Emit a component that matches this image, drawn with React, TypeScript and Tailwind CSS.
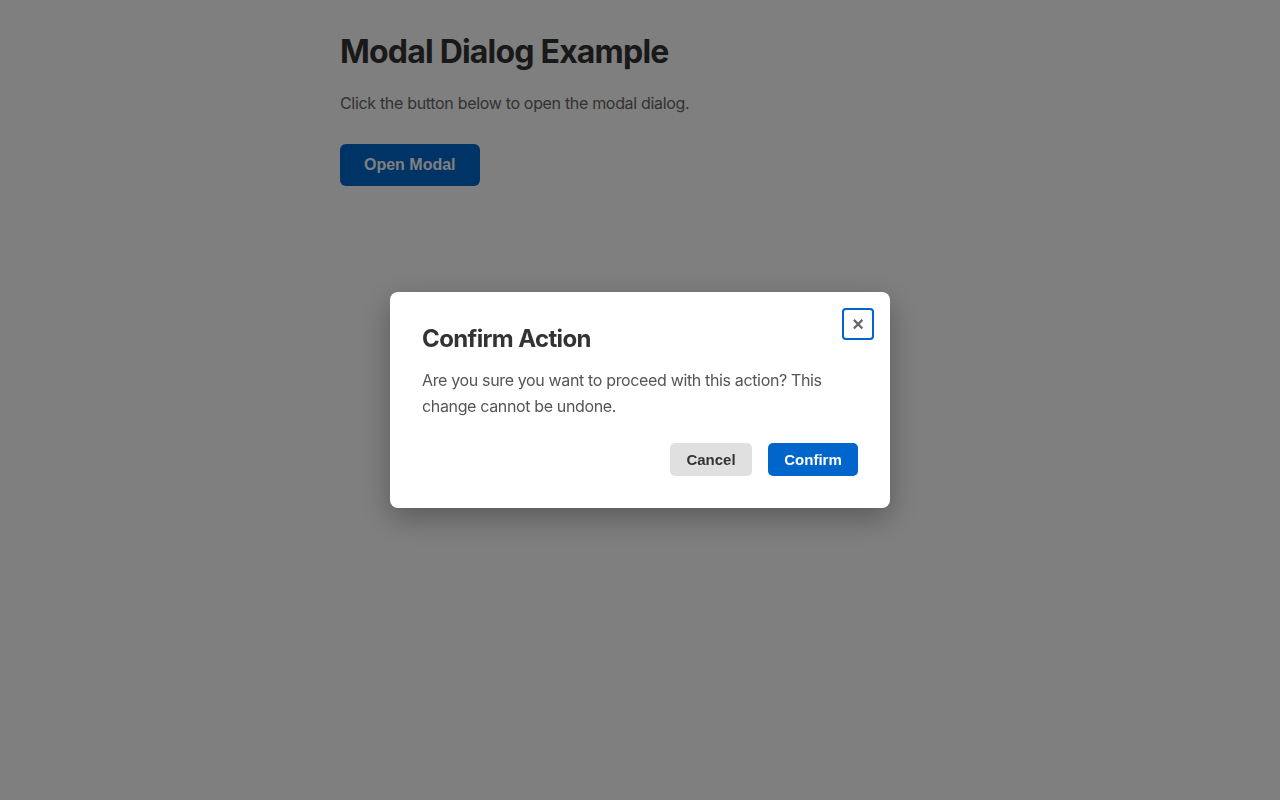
import { useState } from "react";

const ConfirmDialog = ({ onClose }: { onClose: () => void }) => {
	return (
		<div className="fixed inset-0 flex items-center justify-center bg-black/50">
			<div
				role="dialog"
				aria-modal="true"
				aria-labelledby="dialog-title"
				className="relative w-[500px] rounded-lg bg-white p-8 shadow-[0_10px_30px_rgba(0,0,0,0.3)]"
			>
				<button
					onClick={onClose}
					aria-label="Close dialog"
					className="absolute top-4 right-4 flex h-8 w-8 items-center justify-center rounded border-2 border-[#0066cc] font-['Liberation_Sans',Arial,sans-serif] text-[20px] font-bold leading-none text-[#666]"
				>
					×
				</button>
				<h2
					id="dialog-title"
					className="mb-[14px] text-2xl leading-[29px] font-bold tracking-[-0.026em] text-[#333]"
				>
					Confirm Action
				</h2>
				<p className="text-base leading-[26px] tracking-[-0.022em] text-[#555]">
					Are you sure you want to proceed with this action? This change cannot be undone.
				</p>
				<div className="mt-6 flex justify-end gap-4 font-['Liberation_Sans',Arial,sans-serif]">
					<button
						onClick={onClose}
						className="w-[82px] rounded-[5px] bg-[#e0e0e0] py-2 text-[15px] leading-[17px] font-bold text-[#333]"
					>
						Cancel
					</button>
					<button
						onClick={onClose}
						className="w-[90px] rounded-[5px] bg-[#0066cc] py-2 text-[15px] leading-[17px] font-bold text-white"
					>
						Confirm
					</button>
				</div>
			</div>
		</div>
	);
};

export default function App() {
	const [open, setOpen] = useState(true);

	return (
		<div className="min-h-screen bg-white font-['Inter','Noto_Sans',sans-serif]">
			<main className="mx-auto w-[600px] pt-[33px]">
				<h1 className="text-[32px] leading-[38px] font-bold tracking-[-0.025em] text-[#333]">
					Modal Dialog Example
				</h1>
				<p className="mt-5 text-base leading-6 tracking-[-0.02em] text-[#666]">
					Click the button below to open the modal dialog.
				</p>
				<button
					onClick={() => setOpen(true)}
					className="mt-[29px] rounded-md bg-[#0066cc] px-6 py-3 font-['Liberation_Sans',Arial,sans-serif] text-base leading-[18px] font-bold text-white"
				>
					Open Modal
				</button>
			</main>
			{open && <ConfirmDialog onClose={() => setOpen(false)} />}
		</div>
	);
}
